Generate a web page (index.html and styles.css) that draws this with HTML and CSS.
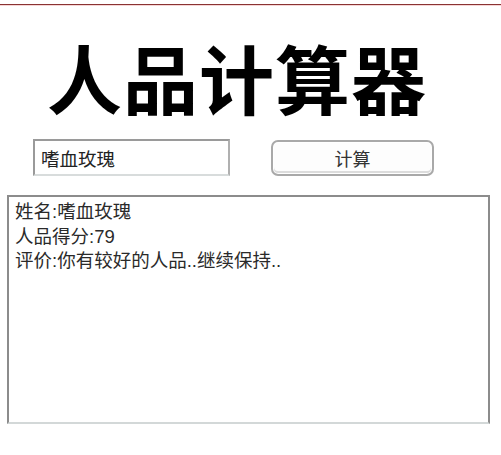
FILE: index.html
```html
<!DOCTYPE html>
<html>
<head>
    <title>人品计算器</title>
    <link rel="stylesheet" href="styles.css">
</head>
<body>
    <div class="page">
        <h1 class="title">人品计算器</h1>

        <div class="form-row">
            <input type="text" class="name-input" id="name" value="嗜血玫瑰">
            <button class="calc-button" id="calc">计算</button>
        </div>

        <div class="result" id="result">
            <div>姓名:嗜血玫瑰</div>
            <div>人品得分:79</div>
            <div>评价:你有较好的人品..继续保持..</div>
        </div>
    </div>
</body>
</html>
```

FILE: styles.css
```css
body { margin: 0; background: #fff; font-family: "Liberation Sans", "Noto Sans CJK SC", sans-serif; color: #222; }
.page { margin-top: 4px; border-top: 1px solid #8a3333; box-shadow: inset 0 1px 0 #f5d6d6; }
.title { margin: 0; padding: 22px 0 0 47px; font-family: "Noto Sans CJK SC", sans-serif; font-size: 75px; font-weight: 700; line-height: 100px; color: #000; letter-spacing: 1px; }
.form-row { display: flex; align-items: flex-start; gap: 41px; padding: 12px 0 0 33px; }
.name-input { box-sizing: border-box; width: 197px; height: 37px; margin: 0; padding: 0 6px; font-family: "Noto Sans CJK SC", sans-serif; font-size: 18.5px; color: #222; border: 2px solid #9a9a9a; border-bottom-color: #d8dcdc; border-right-color: #b0b0b0; background: #fff; outline: none; }
.calc-button { box-sizing: border-box; width: 163px; height: 36px; margin: 1px 0 0; font-family: "Noto Sans CJK SC", sans-serif; font-size: 18px; color: #333; background: #fdfdfd; border: 2px solid #a9a9a9; border-radius: 7px; box-shadow: inset 0 0 0 1px #fff, inset 0 -2px 0 1px #dcdcdc; }
.result { box-sizing: border-box; width: 483px; height: 229px; margin: 19px 0 0 7px; padding: 3px 6px; font-size: 18.5px; line-height: 24.5px; color: #2a2a2a; border: 2px solid #8c8c8c; border-bottom-color: #d3d8d8; }
```
